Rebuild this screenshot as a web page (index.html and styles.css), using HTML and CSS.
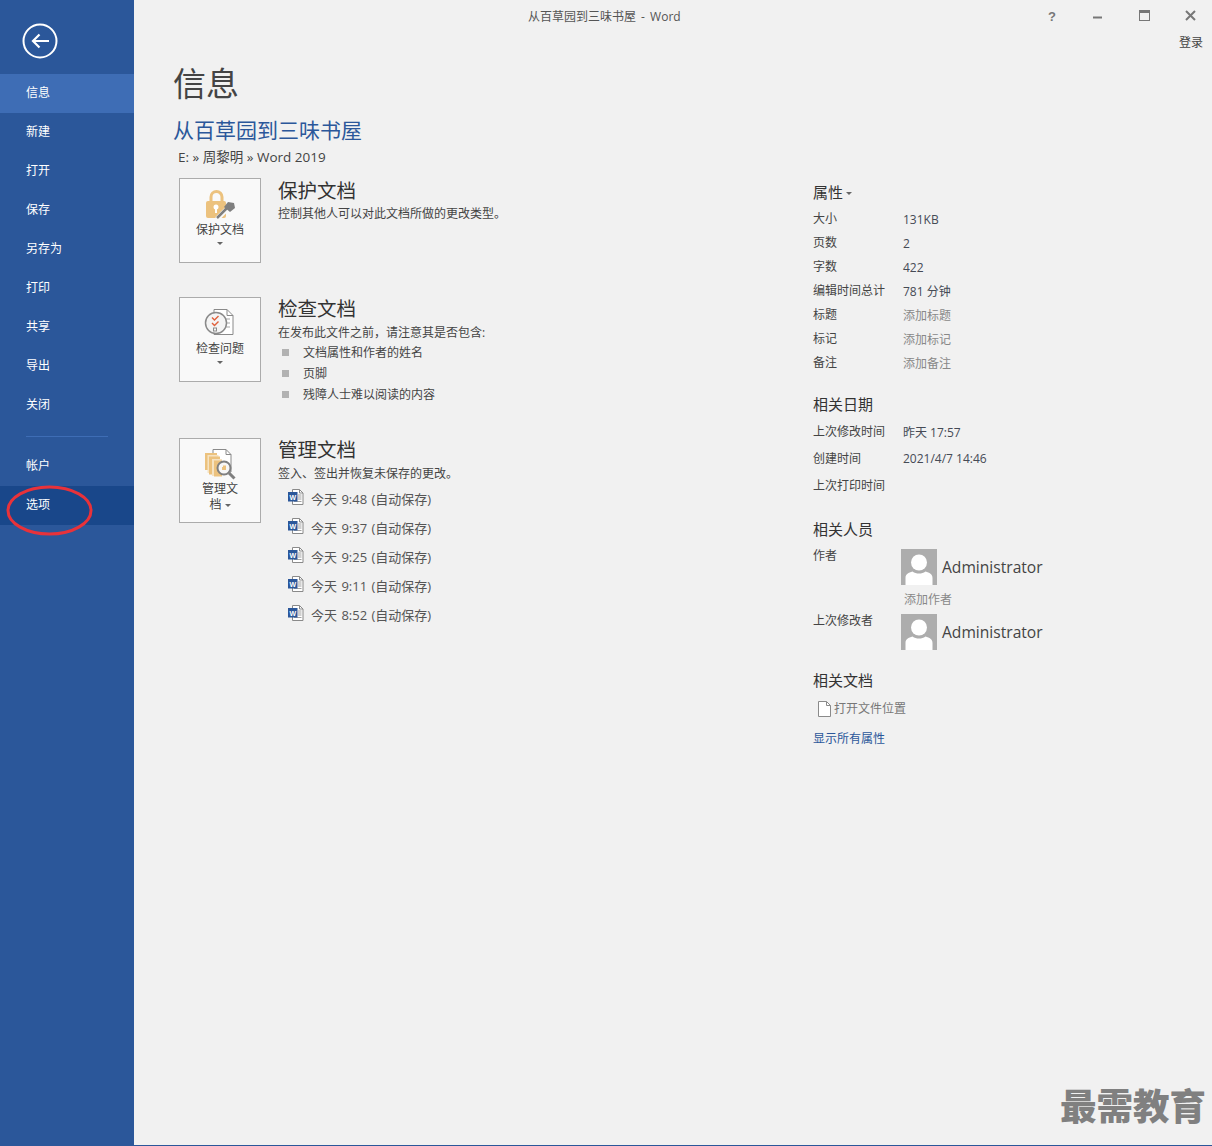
FILE: index.html
```html
<!DOCTYPE html>
<html lang="zh-CN">
<head>
<meta charset="utf-8">
<title>从百草园到三味书屋 - Word</title>
<link rel="stylesheet" href="styles.css">
</head>
<body>
<svg class="defs" width="0" height="0" aria-hidden="true">
  <symbol id="worddoc" viewBox="0 0 16 16">
    <path d="M4.500 .5h7l3.500 3.500v11.500h-10.500z" fill="#fff" stroke="#8a8a8a"/>
    <path d="M11.500 .5v3.500h3.500" fill="none" stroke="#8a8a8a"/>
    <path d="M10 6h3.500M10 8h3.500M10 10h3.500M6 12.500h7.500" stroke="#a0a0a0"/>
    <rect x="0" y="3" width="9.500" height="9.500" fill="#2b579a"/>
  </symbol>
  <symbol id="avatar" viewBox="0 0 36 36">
    <rect width="36" height="36" fill="#adadad"/>
    <circle cx="18" cy="13.500" r="8" fill="#fff"/>
    <path d="M4.500 36v-7c0-4 3-5.500 7-6.500 2 1.500 4 2 6.500 2s4.500-.5 6.500-2c4 1 7 2.500 7 6.500v7z" fill="#fff"/>
  </symbol>
</svg>
<div class="app">
  <aside class="sidebar">
    <div class="back">
      <svg width="36" height="36" viewBox="0 0 36 36">
        <circle cx="18" cy="18" r="16.500" fill="none" stroke="#fff" stroke-width="2"/>
        <path d="M11 18h16M17.500 11.500L11 18l6.500 6.500" fill="none" stroke="#fff" stroke-width="2.200"/>
      </svg>
    </div>
    <nav class="nav">
      <a class="nav-item active">信息</a>
      <a class="nav-item">新建</a>
      <a class="nav-item">打开</a>
      <a class="nav-item">保存</a>
      <a class="nav-item">另存为</a>
      <a class="nav-item">打印</a>
      <a class="nav-item">共享</a>
      <a class="nav-item">导出</a>
      <a class="nav-item">关闭</a>
      <div class="nav-divider"></div>
      <a class="nav-item">帐户</a>
      <a class="nav-item hover">选项</a>
    </nav>
  </aside>
  <div class="main">
    <header class="titlebar">
      <div class="window-title">从百草园到三味书屋 - Word</div>
      <div class="window-side">
        <div class="controls">
          <span class="ctl help">?</span>
          <svg class="ctl-svg" width="46" height="12" viewBox="0 0 46 12"><path d="M0 7.500h9" stroke="#777" stroke-width="2"/></svg>
          <svg class="ctl-svg" width="46" height="12" viewBox="0 0 46 12"><rect x=".5" y=".5" width="10" height="10" fill="none" stroke="#777"/><path d="M0 2h11" stroke="#777" stroke-width="2"/></svg>
          <svg class="ctl-svg last" width="11" height="12" viewBox="0 0 11 12"><path d="M1 1l9 9M10 1l-9 9" stroke="#777" stroke-width="2"/></svg>
        </div>
        <div class="signin">登录</div>
      </div>
    </header>
    <div class="page">
      <h1 class="page-title">信息</h1>
      <div class="doc-title">从百草园到三味书屋</div>
      <div class="doc-path">E: » 周黎明 » Word 2019</div>
      <div class="columns">
        <section class="left">
          <div class="block block-protect">
            <div class="tile">
              <svg class="tile-icon" width="32" height="32" viewBox="0 0 32 32">
                <path d="M7 13V9a5.500 5.500 0 0 1 11 0v4" fill="none" stroke="#ecc27e" stroke-width="3"/>
                <rect x="2" y="13" width="20" height="17" rx="2" fill="#ecc27e"/>
                <circle cx="12" cy="19" r="2.500" fill="#fff"/>
                <rect x="11" y="20" width="2" height="5" fill="#fff"/>
                <path d="M13 31l9-9" stroke="#f9f9f9" stroke-width="5"/>
                <path d="M13 30l10-10" stroke="#7f7f7f" stroke-width="2.500"/>
                <path d="M24 14l6 1 1 5-5 4-6-5z" fill="#7f7f7f"/>
              </svg>
              <div class="tile-label">保护文档</div>
              <i class="caret tile-caret"></i>
            </div>
            <div class="block-text">
              <h2 class="block-title">保护文档</h2>
              <p class="block-desc">控制其他人可以对此文档所做的更改类型。</p>
            </div>
          </div>
          <div class="block block-inspect">
            <div class="tile">
              <svg class="tile-icon" width="32" height="32" viewBox="0 0 32 32">
                <path d="M10 2.500h13l6 6v19H10z" fill="#fff" stroke="#8a8a8a"/>
                <path d="M23 2.500v6h6" fill="none" stroke="#8a8a8a"/>
                <path d="M21 12h5M21 16h5M21 20h5" stroke="#a5a5a5"/>
                <circle cx="12" cy="16" r="10.500" fill="#f4f4f4" stroke="#8a8a8a" stroke-width="1.500"/>
                <path d="M8 10.500l2.500 2.500 4-4M8 16l2.500 2.500 4-4" fill="none" stroke="#e0603c" stroke-width="1.400"/>
                <rect x="9.500" y="21" width="3" height="3" fill="none" stroke="#8a8a8a"/>
              </svg>
              <div class="tile-label">检查问题</div>
              <i class="caret tile-caret"></i>
            </div>
            <div class="block-text">
              <h2 class="block-title">检查文档</h2>
              <p class="block-desc">在发布此文件之前，请注意其是否包含:</p>
              <ul class="bullets">
                <li>文档属性和作者的姓名</li>
                <li>页脚</li>
                <li>残障人士难以阅读的内容</li>
              </ul>
            </div>
          </div>
          <div class="block block-manage">
            <div class="tile">
              <svg class="tile-icon" width="32" height="32" viewBox="0 0 32 32">
                <path d="M9 1.500h13l5 5V24H9z" fill="#fff" stroke="#8a8a8a"/>
                <path d="M22 1.500v5h5" fill="none" stroke="#8a8a8a"/>
                <rect x="1" y="5" width="12" height="17" fill="#ecc27e"/>
                <rect x="3.500" y="7" width="11" height="18" fill="#f6e3c2"/>
                <rect x="5" y="8.500" width="11" height="18" fill="#ecc27e"/>
                <rect x="8" y="11" width="10" height="17" fill="#f6e3c2"/>
                <rect x="10" y="12.500" width="8" height="16" fill="#ecc27e"/>
                <path d="M25 25l5.500 5.500" stroke="#7f7f7f" stroke-width="3"/>
                <circle cx="20" cy="20" r="6.500" fill="#f7f7f7" stroke="#7f7f7f" stroke-width="2"/>
                <path d="M18 20.500h2.500v-3" fill="none" stroke="#ecc27e" stroke-width="3"/>
              </svg>
              <div class="tile-label tile-label-narrow">管理文档 <i class="caret caret-inline"></i></div>
            </div>
            <div class="block-text">
              <h2 class="block-title">管理文档</h2>
              <p class="block-desc">签入、签出并恢复未保存的更改。</p>
              <ul class="versions">
                <li><svg width="16" height="16" viewBox="0 0 16 16"><use href="#worddoc"/><text x="4.750" y="10.500" text-anchor="middle" class="w-letter">W</text></svg><span>今天 9:48 (自动保存)</span></li>
                <li><svg width="16" height="16" viewBox="0 0 16 16"><use href="#worddoc"/><text x="4.750" y="10.500" text-anchor="middle" class="w-letter">W</text></svg><span>今天 9:37 (自动保存)</span></li>
                <li><svg width="16" height="16" viewBox="0 0 16 16"><use href="#worddoc"/><text x="4.750" y="10.500" text-anchor="middle" class="w-letter">W</text></svg><span>今天 9:25 (自动保存)</span></li>
                <li><svg width="16" height="16" viewBox="0 0 16 16"><use href="#worddoc"/><text x="4.750" y="10.500" text-anchor="middle" class="w-letter">W</text></svg><span>今天 9:11 (自动保存)</span></li>
                <li><svg width="16" height="16" viewBox="0 0 16 16"><use href="#worddoc"/><text x="4.750" y="10.500" text-anchor="middle" class="w-letter">W</text></svg><span>今天 8:52 (自动保存)</span></li>
              </ul>
            </div>
          </div>
        </section>
        <section class="right">
          <h3 class="prop-head prop-head-first">属性<i class="caret caret-head"></i></h3>
          <dl class="props">
            <dt>大小</dt><dd class="size">131KB</dd>
            <dt>页数</dt><dd>2</dd>
            <dt>字数</dt><dd>422</dd>
            <dt>编辑时间总计</dt><dd>781 分钟</dd>
            <dt>标题</dt><dd class="ph">添加标题</dd>
            <dt>标记</dt><dd class="ph">添加标记</dd>
            <dt>备注</dt><dd class="ph">添加备注</dd>
          </dl>
          <h3 class="prop-head prop-head-dates">相关日期</h3>
          <dl class="props dates">
            <dt>上次修改时间</dt><dd>昨天 17:57</dd>
            <dt>创建时间</dt><dd>2021/4/7 14:46</dd>
            <dt>上次打印时间</dt><dd></dd>
          </dl>
          <h3 class="prop-head prop-head-people">相关人员</h3>
          <div class="person-row">
            <div class="person-label">作者</div>
            <div class="person"><svg width="36" height="36"><use href="#avatar"/></svg><span>Administrator</span></div>
          </div>
          <div class="add-author">添加作者</div>
          <div class="person-row">
            <div class="person-label">上次修改者</div>
            <div class="person"><svg width="36" height="36"><use href="#avatar"/></svg><span>Administrator</span></div>
          </div>
          <h3 class="prop-head prop-head-docs">相关文档</h3>
          <div class="open-loc">
            <svg width="13" height="16" viewBox="0 0 13 16"><path d="M.5.5h8l4 4v11H.5z" fill="#fff" stroke="#8a8a8a"/><path d="M8.500.5v4h4" fill="none" stroke="#8a8a8a"/></svg>
            <span>打开文件位置</span>
          </div>
          <div class="show-all">显示所有属性</div>
        </section>
      </div>
    </div>
  </div>
</div>
<svg class="annotation" width="88" height="52" viewBox="0 0 88 52"><ellipse cx="43.500" cy="25.500" rx="41.500" ry="23.500" fill="none" stroke="#e8323a" stroke-width="3"/></svg>
<div class="watermark">最需教育</div>
</body>
</html>
```
FILE: styles.css
```css
* { box-sizing: border-box; }
html, body { margin: 0; height: 100%; overflow: hidden; }
body {
  position: relative;
  background: #f1f1f1;
  color: #444;
  font-family: "Open Sans", "Noto Sans CJK SC", sans-serif;
  font-size: 12px;
}
.defs { position: absolute; }
.w-letter { font: bold 7px "Liberation Sans", sans-serif; fill: #fff; }
.app {
  display: flex;
  height: 1146px;
  border-bottom: 1px solid #2b579a;
}
.sidebar { width: 134px; flex: none; background: #2b579a; color: #fff; }
.back { height: 74px; padding: 23px 0 0 22px; }
.back svg { display: block; }
.nav { display: flex; flex-direction: column; }
.nav-item {
  display: block;
  height: 39px;
  line-height: 37px;
  padding-left: 26px;
  font-size: 12px;
  color: #fff;
}
.nav-item.active { background: #3e6db5; }
.nav-item.hover { background: #19478a; }
.nav-divider { height: 1px; margin: 11px 26px 10px; background: #3e6db5; width: 82px; }
.main { flex: 1; min-width: 0; display: flex; flex-direction: column; }
.titlebar { display: flex; height: 52px; }
.window-title {
  margin-left: 394px;
  padding-top: 8px;
  font-size: 12px;
  line-height: 18px;
  word-spacing: 2px;
  color: #555;
  white-space: nowrap;
}
.window-side { margin-left: auto; padding-right: 9px; display: flex; flex-direction: column; align-items: flex-end; }
.controls { display: flex; align-items: flex-start; height: 34px; padding: 10px 0 0 0; margin-right: -1px; }
.ctl-svg { flex: none; display: block; }
.ctl-svg.last { width: 11px; margin-right: 8px; margin-left: 0; }
.help {
  width: 45px;
  font: bold 13px/13px "Liberation Sans", sans-serif;
  color: #777;
}
.signin { font-size: 12px; line-height: 18px; color: #444; }
.page { padding: 0 0 0 40px; }
.page-title { margin: 10px 0 0 -1px; font-size: 33px; line-height: 44px; font-weight: 400; color: #444; }
.doc-title { margin: 9px 0 0 -1px; font-size: 21px; line-height: 30px; color: #2b579a; }
.doc-path { margin: 2px 0 0 4px; font-size: 13.500px; line-height: 20px; color: #444; white-space: nowrap; }
.columns { display: flex; margin-top: 11px; }
.left { width: 639px; flex: none; padding-left: 5px; }
.block { display: flex; }
.block-protect { height: 119px; }
.block-inspect { height: 141px; }
.tile {
  width: 82px;
  height: 85px;
  flex: none;
  display: flex;
  flex-direction: column;
  align-items: center;
  padding-top: 9px;
  background-color: #f9f9f9;
  border: 1px solid #ababab;
}
.tile-icon { display: block; flex: none; }
.tile-label { font-size: 12px; line-height: 16px; color: #444; text-align: center; margin-top: 2px; }
.tile-label-narrow { width: 44px; margin-top: 1px; }
.caret {
  display: block;
  width: 0;
  height: 0;
  border-left: 3px solid transparent;
  border-right: 3px solid transparent;
  border-top: 3px solid #666;
}
.tile-caret { margin-top: 4px; }
.caret-inline { display: inline-block; vertical-align: middle; margin-left: 0; }
.caret-head { display: inline-block; vertical-align: middle; margin-left: 3px; }
.block-text { padding-left: 17px; }
.block-title { margin: 0; font-size: 19.500px; line-height: 24px; font-weight: 400; color: #333; white-space: nowrap; }
.block-desc { margin: 0; font-size: 12px; line-height: 22px; color: #444; white-space: nowrap; }
.block-protect .block-title { margin-top: 1px; }
.block-inspect .block-desc { margin-top: 1px; }
.block-manage .block-desc { margin-top: 1px; }
.bullets { list-style: none; margin: -2px 0 0; padding: 0; }
.bullets li {
  position: relative;
  height: 21px;
  line-height: 21px;
  padding-left: 25px;
  white-space: nowrap;
}
.bullets li::before {
  content: "";
  position: absolute;
  left: 4px;
  top: 7px;
  width: 7px;
  height: 7px;
  background: #b2b2b2;
}
.versions { list-style: none; margin: -1px 0 0; padding: 0 0 0 10px; }
.versions li { display: flex; align-items: center; height: 29px; font-size: 13px; word-spacing: 1px; white-space: nowrap; color: #555; }
.versions svg { flex: none; margin: -3px 7px 0 0; }
.right { flex: 1; }
.prop-head { margin: 0; font-size: 15px; line-height: 20px; font-weight: 400; color: #333; }
.prop-head-first { margin-top: 4px; }
.prop-head-dates { margin-top: 20px; }
.prop-head-people { margin-top: 21px; }
.prop-head-docs { margin-top: 20px; }
.props { display: grid; grid-template-columns: 90px 1fr; margin: 4px 0 0; grid-auto-rows: 24px; align-items: center; }
.props dt { font-size: 12px; color: #444; white-space: nowrap; }
.props dd { margin: 0; padding-top: 2px; font-size: 12px; color: #454a55; }
.props .ph { color: #888; }
.dates { grid-auto-rows: 27px; margin-top: 3px; }
.person-row { display: flex; }
.person-label { width: 88px; flex: none; font-size: 12px; line-height: 14px; }
.person { display: flex; align-items: center; gap: 5px; font-size: 15.600px; color: #444; }
.person svg { display: block; flex: none; }
.person-row:first-of-type { margin-top: 10px; }
.add-author { margin: 8px 0 0 91px; font-size: 12px; line-height: 14px; color: #888; height: 21px; }
.open-loc { display: flex; align-items: center; gap: 3px; margin: 11px 0 0 5px; font-size: 12px; line-height: 16px; color: #777; }
.open-loc svg { flex: none; display: block; }
.show-all { margin-top: 14px; font-size: 12px; line-height: 16px; color: #2b579a; }
.annotation { position: absolute; left: 6px; top: 485px; }
.watermark {
  position: absolute;
  right: 6px;
  top: 1080px;
  font-size: 36.500px;
  line-height: 52px;
  font-weight: 900;
  color: #808080;
  white-space: nowrap;
}
```
